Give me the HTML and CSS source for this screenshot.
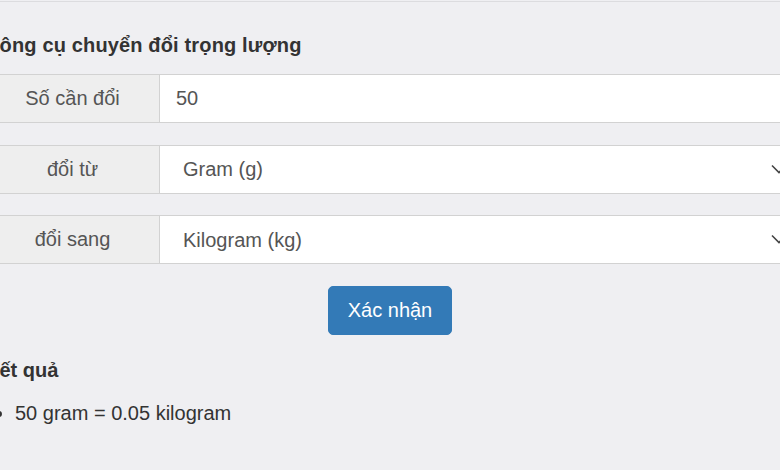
FILE: index.html
```html
<!DOCTYPE html>
<html lang="vi">
<head>
  <meta charset="UTF-8" />
  <meta name="viewport" content="width=device-width, initial-scale=1" />
  <title>Công cụ chuyển đổi trọng lượng</title>
  <link rel="stylesheet" href="styles.css">
</head>
<body>
  <div class="top-rule"></div>
  <div class="container">
    <h3 class="tool-title">Công cụ chuyển đổi trọng lượng</h3>

    <div class="input-group">
      <label class="addon" for="amount">Số cần đổi</label>
      <input type="text" id="amount" class="field" value="50" />
    </div>

    <div class="input-group">
      <label class="addon" for="fromUnit">đổi từ</label>
      <div class="select-wrap">
        <select id="fromUnit" class="field">
          <option>Gram (g)</option>
          <option>Kilogram (kg)</option>
        </select>
        <svg class="chevron" width="16" height="10" viewBox="0 0 16 10" aria-hidden="true"><path d="M1 1.5 L8 8.5 L15 1.5" fill="none" stroke="#444" stroke-width="1.6"/></svg>
      </div>
    </div>

    <div class="input-group">
      <label class="addon" for="toUnit">đổi sang</label>
      <div class="select-wrap">
        <select id="toUnit" class="field">
          <option>Gram (g)</option>
          <option selected>Kilogram (kg)</option>
        </select>
        <svg class="chevron" width="16" height="10" viewBox="0 0 16 10" aria-hidden="true"><path d="M1 1.5 L8 8.5 L15 1.5" fill="none" stroke="#444" stroke-width="1.6"/></svg>
      </div>
    </div>

    <div class="actions">
      <button class="btn-primary">Xác nhận</button>
    </div>

    <h3 class="result-title">Kết quả</h3>
    <ul class="result-list">
      <li>50 gram = 0.05 kilogram</li>
    </ul>
  </div>
</body>
</html>
```

FILE: styles.css
```css
:root {
  --page: #efeff2;
  --addon: #eeeeee;
  --border: #d2d2d2;
  --text: #333;
  --muted: #555;
  --blue: #337ab7;
}
body {
  margin: 0;
  background: var(--page);
  font-family: "Liberation Sans", Arial, sans-serif;
  color: var(--text);
  overflow: hidden;
}
.top-rule {
  margin-top: 1px;
  border-top: 1px solid #dcdcdf;
}
.container {
  width: 810px;
  margin-left: -15px;
}
.tool-title, .result-title {
  font-size: 20px;
  line-height: 22px;
  font-weight: bold;
  margin: 0;
}
.tool-title {
  padding-top: 32px;
  margin-bottom: 18px;
  letter-spacing: 0.15px;
}
.input-group {
  display: flex;
  height: 49px;
  box-sizing: border-box;
  margin-bottom: 21.5px;
}
.addon {
  flex: 0 0 175px;
  box-sizing: border-box;
  display: flex;
  align-items: center;
  justify-content: center;
  background: var(--addon);
  border: 1px solid var(--border);
  font-size: 20px;
  color: var(--muted);
}
.field {
  flex: 1;
  width: 100%;
  height: 49px;
  box-sizing: border-box;
  border: 1px solid var(--border);
  border-left: none;
  background: #fff;
  font-family: inherit;
  font-size: 20px;
  color: var(--muted);
  padding: 0 16px;
  outline: none;
}
.select-wrap {
  flex: 1;
  position: relative;
  display: flex;
}
select.field {
  appearance: none;
  -webkit-appearance: none;
  padding-left: 23px;
}
.chevron {
  position: absolute;
  right: 8px;
  top: 19px;
  pointer-events: none;
}
.actions {
  display: flex;
  justify-content: center;
  padding-top: 0.5px;
}
.btn-primary {
  background: var(--blue);
  color: #fff;
  border: 1px solid var(--blue);
  border-radius: 5px;
  font-family: inherit;
  font-size: 20px;
  line-height: 27px;
  padding: 10px 19px;
  cursor: pointer;
}
.result-title {
  margin-top: 24px;
}
.result-list {
  margin: 18px 0 0;
  padding-left: 30px;
  font-size: 20px;
  line-height: 28px;
}
```
